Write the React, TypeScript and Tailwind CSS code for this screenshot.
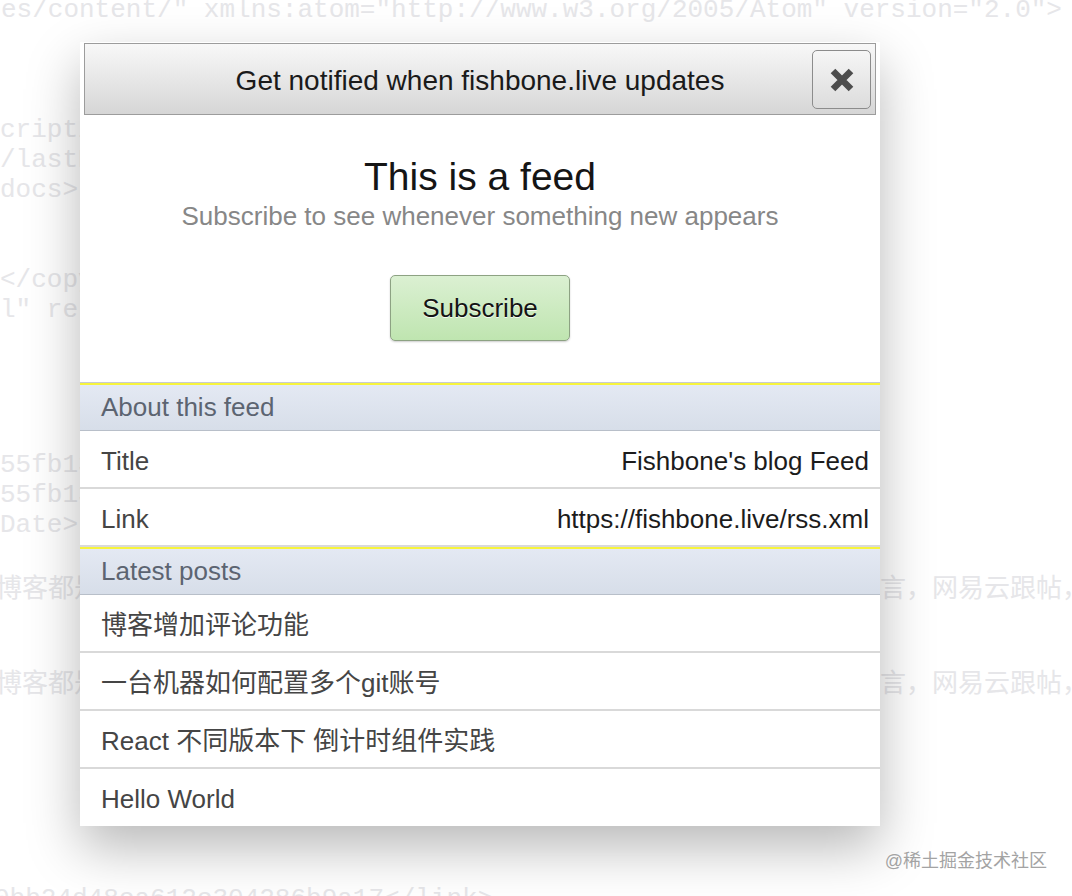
import React from 'react';

const mono = { fontFamily: '"Liberation Mono", "Noto Sans CJK SC", monospace' };
const sans = 'font-["Liberation_Sans","Noto_Sans_CJK_SC",sans-serif]';

const posts = ['博客增加评论功能', '一台机器如何配置多个git账号', 'React 不同版本下 倒计时组件实践', 'Hello World'];

const SectionHeader = ({ label }: { label: string }) => (
  <div className="h-[48px] border-t-2 border-t-[#f7f43c] border-b border-b-[#b8bfc9] bg-gradient-to-b from-[#e4e9f3] to-[#d7dee9] flex items-center pl-[21px] pb-[1px] text-[26px] leading-[30px] text-[#5c6471]">
    {label}
  </div>
);

const InfoRow = ({ label, value }: { label: string; value: string }) => (
  <div className="h-[58px] border-b-2 border-[#d9d9d9] flex items-center justify-between pl-[21px] pr-[11px] pt-[3px] text-[26px] leading-[30px]">
    <span className="text-[#454545]">{label}</span>
    <span className="text-[#1c1c1c]">{value}</span>
  </div>
);

export default function App() {
  return (
    <div className={`relative w-[1072px] h-[896px] overflow-hidden bg-white ${sans}`}>
      {/* page behind the popup */}
      <div className="flex flex-col whitespace-nowrap text-[26px] leading-[30px] text-[#e6e6e9]" style={mono}>
        <div className="mt-[-5px] h-[30px] ml-[1px]">es/content/" xmlns:atom="http://www.w3.org/2005/Atom" version="2.0"&gt;</div>
        <div className="h-[90px]" />
        <div className="h-[30px]">cription&gt;Fishbone's blog&lt;/description&gt;</div>
        <div className="h-[30px]">/lastBuildDate&gt;</div>
        <div className="h-[30px]">docs&gt;</div>
        <div className="h-[60px]" />
        <div className="h-[30px]">&lt;/copyright&gt;</div>
        <div className="h-[30px]">l" rel="self"/&gt;</div>
        <div className="h-[125px]" />
        <div className="h-[30px]">55fb13a7c3d1</div>
        <div className="h-[30px]">55fb13a7c3d1</div>
        <div className="h-[30px]">Date&gt;</div>
        <div className="h-[35px]" />
        <div className="h-[30px] ml-[-4px]">博客都是静态页面，没有后台，评论功能需要借助第三方的服务，比如多说留言，网易云跟帖，</div>
        <div className="h-[65px]" />
        <div className="h-[30px] ml-[-4px]">博客都是静态页面，没有后台，评论功能需要借助第三方的服务，比如多说留言，网易云跟帖，</div>
        <div className="h-[184px]" />
        <div className="h-[30px] ml-[-6px]">0bb24d48ca612c304286b9a17&lt;/link&gt;</div>
      </div>

      {/* popup */}
      <div className="absolute left-[80px] top-[42px] w-[800px] bg-white pt-[1px] flex flex-col shadow-[0_22px_50px_rgba(0,0,0,0.28)]">
        <div className="mx-[4px] relative h-[72px] border border-[#9c9c9c] bg-gradient-to-b from-[#f8f8f8] to-[#d6d6d6] flex items-center justify-center pt-[3px] text-[28px] text-[#1a1a1a]">
          Get notified when fishbone.live updates
          <button className="absolute right-[4px] top-[6px] w-[59px] h-[59px] rounded-[5px] border border-[#8c8c8c] bg-gradient-to-b from-[#f6f6f6] to-[#dcdcdc] flex items-center justify-center">
            <svg width="26" height="26" viewBox="0 0 26 26">
              <path d="M4 4 L22 22 M22 4 L4 22" stroke="#4d4d4d" strokeWidth="6.5" strokeLinecap="butt" />
            </svg>
          </button>
        </div>
        <div className="flex flex-col items-center pt-[42px] pb-[41px] border-b border-[#c8cbd0]">
          <h1 className="text-[39px] leading-[40px] text-[#151515]">This is a feed</h1>
          <p className="mt-[4px] text-[26px] leading-[30px] text-[#878787]">Subscribe to see whenever something new appears</p>
          <button className="mt-[44px] w-[180px] h-[66px] rounded-[5px] border border-[#8da283] bg-gradient-to-b from-[#dbf0d2] to-[#bfe5b0] shadow-[0_1px_2px_rgba(0,0,0,0.2)] text-[26px] text-[#141414] [text-shadow:0_1px_0_rgba(255,255,255,0.8)]">
            Subscribe
          </button>
        </div>
        <SectionHeader label="About this feed" />
        <InfoRow label="Title" value="Fishbone's blog Feed" />
        <InfoRow label="Link" value="https://fishbone.live/rss.xml" />
        <SectionHeader label="Latest posts" />
        {posts.map((p, i) => (
          <div
            key={p}
            className={`flex items-center pl-[21px] pt-[3px] text-[26px] leading-[30px] text-[#454545] ${i < posts.length - 1 ? 'h-[58px] border-b-2 border-[#d9d9d9]' : 'h-[57px]'}`}
          >
            {p}
          </div>
        ))}
      </div>

      {/* watermark */}
      <div className="absolute right-[25px] top-[848px] text-[18px] leading-[26px] text-[#a3a3a3] [text-shadow:0_0_2px_#fff]">
        @稀土掘金技术社区
      </div>
    </div>
  );
}
